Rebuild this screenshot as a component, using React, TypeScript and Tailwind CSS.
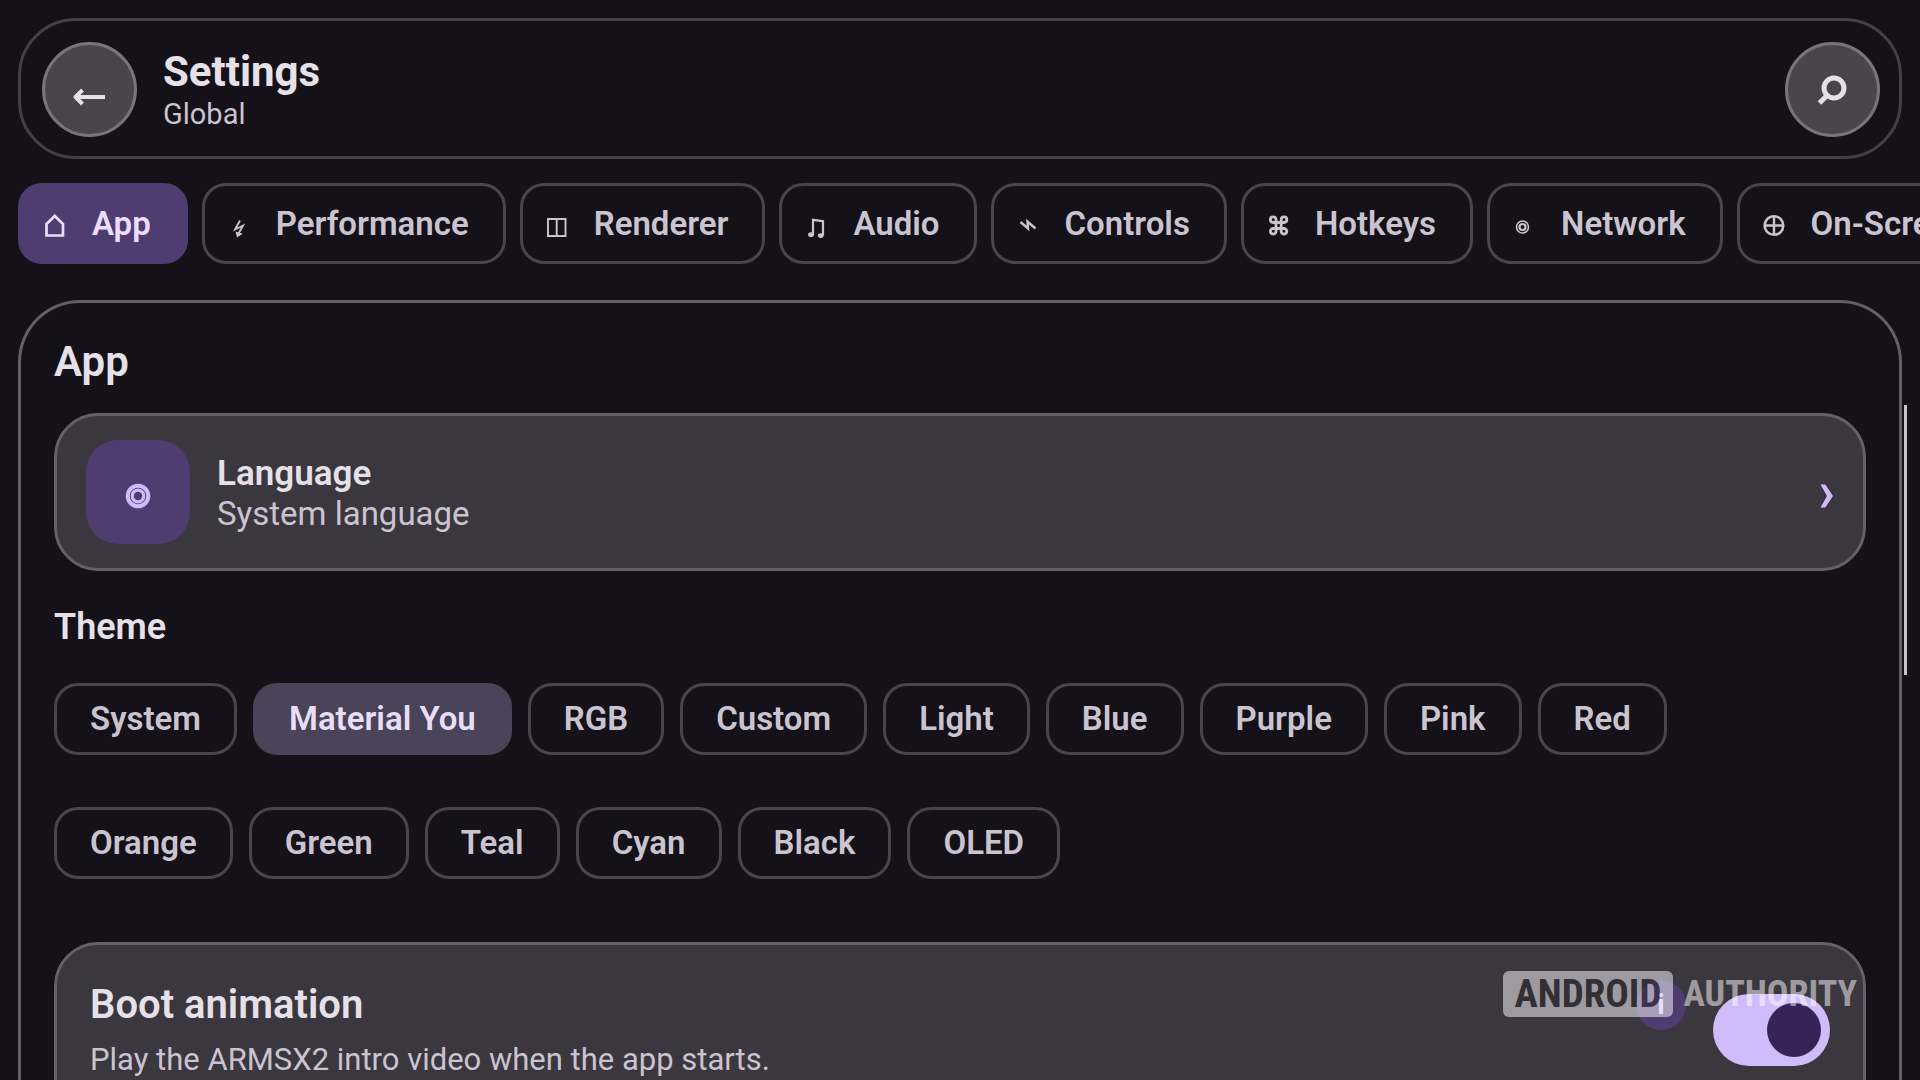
import { useState } from 'react'
import type { ReactNode } from 'react'

const HomeIcon = <path d="M2.500 12 10.800 4l8.200 8V23.500H2.500z" strokeWidth="2.700" />
const BoltIcon = (
  <>
    <path d="M12 8.500 7 17.500l8-4-5 9" strokeWidth="1.800" />
    <path d="M7.500 19.500l1.500 6 5.800-3.800z" fill="currentColor" stroke="none" />
  </>
)
const SplitIcon = <path d="M2 7h17.500v17H2zM10.700 7v17" strokeWidth="1.900" />
const MusicIcon = (
  <>
    <path d="M8 22.500V7.800l10 1.400V23" strokeWidth="2.200" />
    <ellipse cx="6" cy="22.700" rx="2.900" ry="2.400" fill="currentColor" stroke="none" />
    <ellipse cx="15.800" cy="23.600" rx="2.900" ry="2.400" fill="currentColor" stroke="none" />
  </>
)
const ZapIcon = <path d="M3.500 10 11 16.500 10.500 9.500 18.500 16.500" strokeWidth="2.400" />
const CommandIcon = (
  <path d="M9 10V7.500A2.800 2.800 0 1 0 6.200 10.500H17A2.800 2.800 0 1 0 14.200 7.500V19A2.800 2.800 0 1 0 17 16.500H6.200A2.800 2.800 0 1 0 9 19Z" strokeWidth="2.800" />
)
const TargetIcon = (
  <>
    <circle cx="9.500" cy="15" r="6" strokeWidth="1.600" />
    <circle cx="9.500" cy="15" r="3" strokeWidth="2.200" />
  </>
)
const CrossIcon = (
  <>
    <circle cx="11" cy="13.500" r="9.300" strokeWidth="2.600" />
    <path d="M11 4.500v18M2 13.500h18" strokeWidth="2.400" />
  </>
)

const TABS: { label: string; icon: ReactNode }[] = [
  { label: 'App', icon: HomeIcon },
  { label: 'Performance', icon: BoltIcon },
  { label: 'Renderer', icon: SplitIcon },
  { label: 'Audio', icon: MusicIcon },
  { label: 'Controls', icon: ZapIcon },
  { label: 'Hotkeys', icon: CommandIcon },
  { label: 'Network', icon: TargetIcon },
  { label: 'On-Screen', icon: CrossIcon },
]

const THEMES = [
  'System', 'Material You', 'RGB', 'Custom', 'Light', 'Blue', 'Purple', 'Pink', 'Red',
  'Orange', 'Green', 'Teal', 'Cyan', 'Black', 'OLED',
]

function RoundButton({ label, children }: { label: string; children: ReactNode }) {
  return (
    <button type="button" aria-label={label}
      className="flex size-[95px] shrink-0 items-center justify-center rounded-full border-3 border-[#78747c] bg-[#48454c] text-[#e6e0e9]">
      {children}
    </button>
  )
}

function Header() {
  return (
    <header className="flex items-center gap-[26px] rounded-[58px] border-3 border-[#434046] pt-[21px] pr-[19px] pb-[19px] pl-[21px]">
      <RoundButton label="Back">
        <svg viewBox="0 0 40 40" className="size-10" fill="none" stroke="currentColor" strokeWidth="4" aria-hidden="true">
          <path d="M6 27h29" />
          <path d="M12.500 20 5.500 27l7 7" strokeLinejoin="round" />
        </svg>
      </RoundButton>
      <div className="grow">
        <h1 className="text-[42px] leading-12 font-bold">Settings</h1>
        <p className="text-[29px] leading-9 text-[#cac4d0]">Global</p>
      </div>
      <RoundButton label="Search">
        <svg viewBox="0 0 40 40" className="size-10" fill="none" stroke="currentColor" strokeWidth="5" aria-hidden="true">
          <circle cx="21" cy="18" r="10" />
          <path d="M14.500 25l-8 8" />
        </svg>
      </RoundButton>
    </header>
  )
}

function TabBar({ active, onSelect }: { active: string; onSelect: (tab: string) => void }) {
  return (
    <nav className="-mr-[18px] flex gap-3.5 overflow-hidden" aria-label="Settings sections">
      {TABS.map(({ label, icon }) => (
        <button key={label} type="button" onClick={() => onSelect(label)}
          className={`flex h-[81px] shrink-0 items-center gap-6 rounded-3xl border-3 pr-[34px] pl-[23px] text-[33px] font-semibold ${
            label === active ? 'border-[#4f3d71] bg-[#4f3d71] text-[#eaddff]' : 'border-[#49454f] text-[#cac4d0]'
          }`}>
          <svg viewBox="0 0 24 24" className="size-6 overflow-visible" fill="none" stroke="currentColor" aria-hidden="true">{icon}</svg>
          {label}
        </button>
      ))}
    </nav>
  )
}

function LanguageRow() {
  return (
    <button type="button"
      className="flex w-full items-center gap-[27px] rounded-[44px] border-3 border-[#636067] bg-[#3b373e] px-[29px] py-6 text-left">
      <span className="flex size-[104px] shrink-0 items-center justify-center rounded-[32px] bg-[#4f3d71] text-[#d0bcfb]">
        <svg viewBox="0 0 32 32" className="mt-2 size-8" fill="none" stroke="currentColor" aria-hidden="true">
          <circle cx="16" cy="16" r="10.300" strokeWidth="4" />
          <circle cx="16" cy="16" r="5.800" strokeWidth="3.200" />
        </svg>
      </span>
      <span className="grow pt-1">
        <span className="block text-[35px] leading-10 font-semibold">Language</span>
        <span className="block text-[33px] leading-10 text-[#cac4d0]">System language</span>
      </span>
      <svg viewBox="0 0 14 26" className="mt-2 h-[26px] w-3.5 text-[#d0bcfb]" aria-hidden="true">
        <path d="M0.500 1.500h4.800L13 13 5.300 24.500H0.500L7 13z" fill="currentColor" />
      </svg>
    </button>
  )
}

function ThemePicker() {
  const [theme, setTheme] = useState('Material You')

  return (
    <div className="flex flex-wrap gap-x-4 gap-y-13 pr-[120px]">
      {THEMES.map((name) => (
        <button key={name} type="button" aria-pressed={name === theme} onClick={() => setTheme(name)}
          className={`h-18 rounded-3xl border-3 px-[33px] text-[33px] font-semibold ${
            name === theme ? 'border-[#4a4458] bg-[#4a4458] text-[#e8def8]' : 'border-[#49454f] text-[#cac4d0]'
          }`}>
          {name}
        </button>
      ))}
    </div>
  )
}

function Watermark() {
  return (
    <div className="pointer-events-none absolute top-[26px] right-1.5 flex items-center gap-2.5 font-['Roboto_Condensed','Liberation_Sans_Narrow',sans-serif] leading-[46px] font-bold opacity-50">
      <span className="rounded-md bg-white px-3 text-[39px] text-[#2b282e]">ANDROID</span>
      <span className="text-[36px] text-white">AUTHORITY</span>
    </div>
  )
}

function BootAnimationRow() {
  const [on, setOn] = useState(true)

  return (
    <div className="relative flex items-start rounded-[44px] border-3 border-[#636067] bg-[#3b373e] px-[33px] pt-[35px] pb-12">
      <div className="grow">
        <label htmlFor="boot-animation" className="block text-[40px] leading-[50px] font-semibold">Boot animation</label>
        <p className="mt-2.5 text-[31px] leading-10 text-[#cac4d0]">Play the ARMSX2 intro video when the app starts.</p>
      </div>
      <button type="button" aria-label="About boot animation"
        className="mr-[27px] flex size-[50px] items-center justify-center rounded-full bg-[#4f3d71] text-[28px] font-bold text-[#d0bcfb]">
        i
      </button>
      <input id="boot-animation" type="checkbox" role="switch" checked={on} onChange={(e) => setOn(e.target.checked)}
        className="mt-3.5 h-18 w-[117px] appearance-none rounded-full bg-[#49454f] p-[9px] before:block before:size-[54px] before:rounded-full before:bg-[#938f99] checked:bg-[#d0bcfb] checked:before:ml-[45px] checked:before:bg-[#372357]" />
      <Watermark />
    </div>
  )
}

export default function App() {
  const [tab, setTab] = useState('App')

  return (
    <div className="relative flex h-screen flex-col overflow-hidden bg-[#141118] px-[18px] pt-[18px] font-[Roboto,sans-serif] text-[#e6e0e9]">
      <Header />
      <div className="mt-6">
        <TabBar active={tab} onSelect={setTab} />
      </div>

      <main className="mt-9 shrink-0 rounded-t-[62px] border-3 border-b-0 border-[#636067] px-[33px] pt-8 pb-9">
        <h2 className="text-[42px] leading-[54px] font-semibold">{tab}</h2>
        <div className="mt-6">
          <LanguageRow />
        </div>
        <h3 className="mt-8 mb-8 text-[36px] leading-12 font-semibold">Theme</h3>
        <ThemePicker />
        <div className="mt-[63px]">
          <BootAnimationRow />
        </div>
      </main>

      {/* Scroll thumb */}
      <div className="absolute top-[405px] right-[13px] h-[270px] w-[3px] bg-[#cac4d0]" />
    </div>
  )
}
